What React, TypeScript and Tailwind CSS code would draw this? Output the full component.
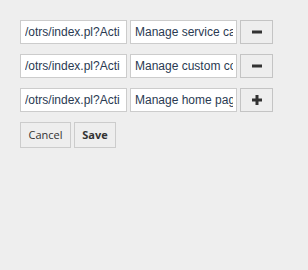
import React from "react";

const rows = [
  { url: "/otrs/index.pl?Action=AdminService", label: "Manage service categories", sign: "minus" },
  { url: "/otrs/index.pl?Action=AdminDynamicField", label: "Manage custom configuration", sign: "minus" },
  { url: "/otrs/index.pl?Action=AdminHomePage", label: "Manage home page", sign: "plus" },
];

function Sign({ kind }: { kind: string }) {
  return (
    <svg width="12" height="12" viewBox="0 0 12 12">
      <rect x="1" y="4.5" width="10" height="3" fill="#333" />
      {kind === "plus" && <rect x="4.5" y="1" width="3" height="10" fill="#333" />}
    </svg>
  );
}

export default function App() {
  return (
    <div className="w-[308px] h-[270px] bg-[#eeeeee] pl-[20px] pt-[20px] flex flex-col gap-[10px]" style={{ fontFamily: '"Liberation Sans", Arial, sans-serif' }}>
      {rows.map((r, i) => (
        <div key={i} className="flex items-center h-[24px]">
          <input
            readOnly
            value={r.url}
            className="w-[107px] h-[24px] border border-[#cccccc] bg-white pl-[4px] pr-[6px] text-[12px] text-[#2a3a52] outline-none"
          />
          <input
            readOnly
            value={r.label}
            className="ml-[3px] w-[107px] h-[24px] border border-[#cccccc] bg-white pl-[4px] pr-[3px] text-[12px] text-[#2a3a52] outline-none"
          />
          <button className="ml-[3px] w-[33px] h-[24px] border border-[#c4c4c4] bg-[#eeeeee] flex items-center justify-center">
            <Sign kind={r.sign} />
          </button>
        </div>
      ))}
      <div className="flex gap-[3px]" style={{ fontFamily: '"Open Sans", sans-serif' }}>
        <button className="w-[51px] h-[26px] border border-[#cccccc] bg-[#eeeeee] text-[11px] text-[#333]">Cancel</button>
        <button className="w-[42px] h-[26px] border border-[#cccccc] bg-[#eeeeee] text-[11px] font-bold text-[#333]">Save</button>
      </div>
    </div>
  );
}
